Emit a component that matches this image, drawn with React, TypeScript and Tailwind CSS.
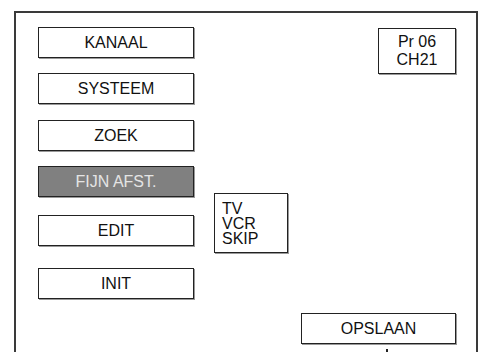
const menu = [
  { label: "KANAAL", mt: "mt-0" },
  { label: "SYSTEEM", mt: "mt-[15px]" },
  { label: "ZOEK", mt: "mt-[16px]" },
  { label: "FIJN AFST.", mt: "mt-[15px]", active: true },
  { label: "EDIT", mt: "mt-[18px]" },
  { label: "INIT", mt: "mt-[22px]" },
];

function MenuButton({ label, mt, active }: { label: string; mt: string; active?: boolean }) {
  return (
    <div
      className={`${mt} h-[31px] w-[156px] flex items-center justify-center border border-[#222] shadow-[1px_1px_0_#999] ${
        active ? "bg-[#808080] text-[#e4e4e4]" : "bg-white text-[#111]"
      }`}
    >
      {label}
    </div>
  );
}

export default function App() {
  return (
    <div className="w-[480px] h-[352px] overflow-hidden bg-white font-['Liberation_Sans',Arial,sans-serif] text-[16px] leading-none">
      <div className="ml-[14px] mt-[11px] w-[464px] h-[350px] border-2 border-b-0 border-[#3a3a3a] flex pl-[22px] pt-[14px] pr-[20px]">
        <div className="flex flex-col">
          {menu.map((m) => (
            <MenuButton key={m.label} {...m} />
          ))}
        </div>

        <div className="ml-[20px] mt-[166px]">
          <div className="w-[74px] h-[60px] border border-[#222] shadow-[1px_1px_0_#999] pl-[7px] pt-[7px] leading-[15px] text-[#111]">
            <div>TV</div>
            <div>VCR</div>
            <div>SKIP</div>
          </div>
        </div>

        <div className="ml-auto flex flex-col items-end">
          <div className="mt-[1px] w-[78px] h-[46px] border border-[#222] shadow-[1px_1px_0_#999] flex flex-col items-center justify-center leading-[18px] text-[#111]">
            <div>Pr 06</div>
            <div>CH21</div>
          </div>
          <div className="mt-[239px] w-[155px] h-[31px] border border-[#222] shadow-[1px_1px_0_#999] flex items-center justify-center text-[#111]">
            OPSLAAN
          </div>
          <div className="mr-[68px] mt-[5px] w-[2px] h-[3px] bg-[#222]" />
        </div>
      </div>
    </div>
  );
}
